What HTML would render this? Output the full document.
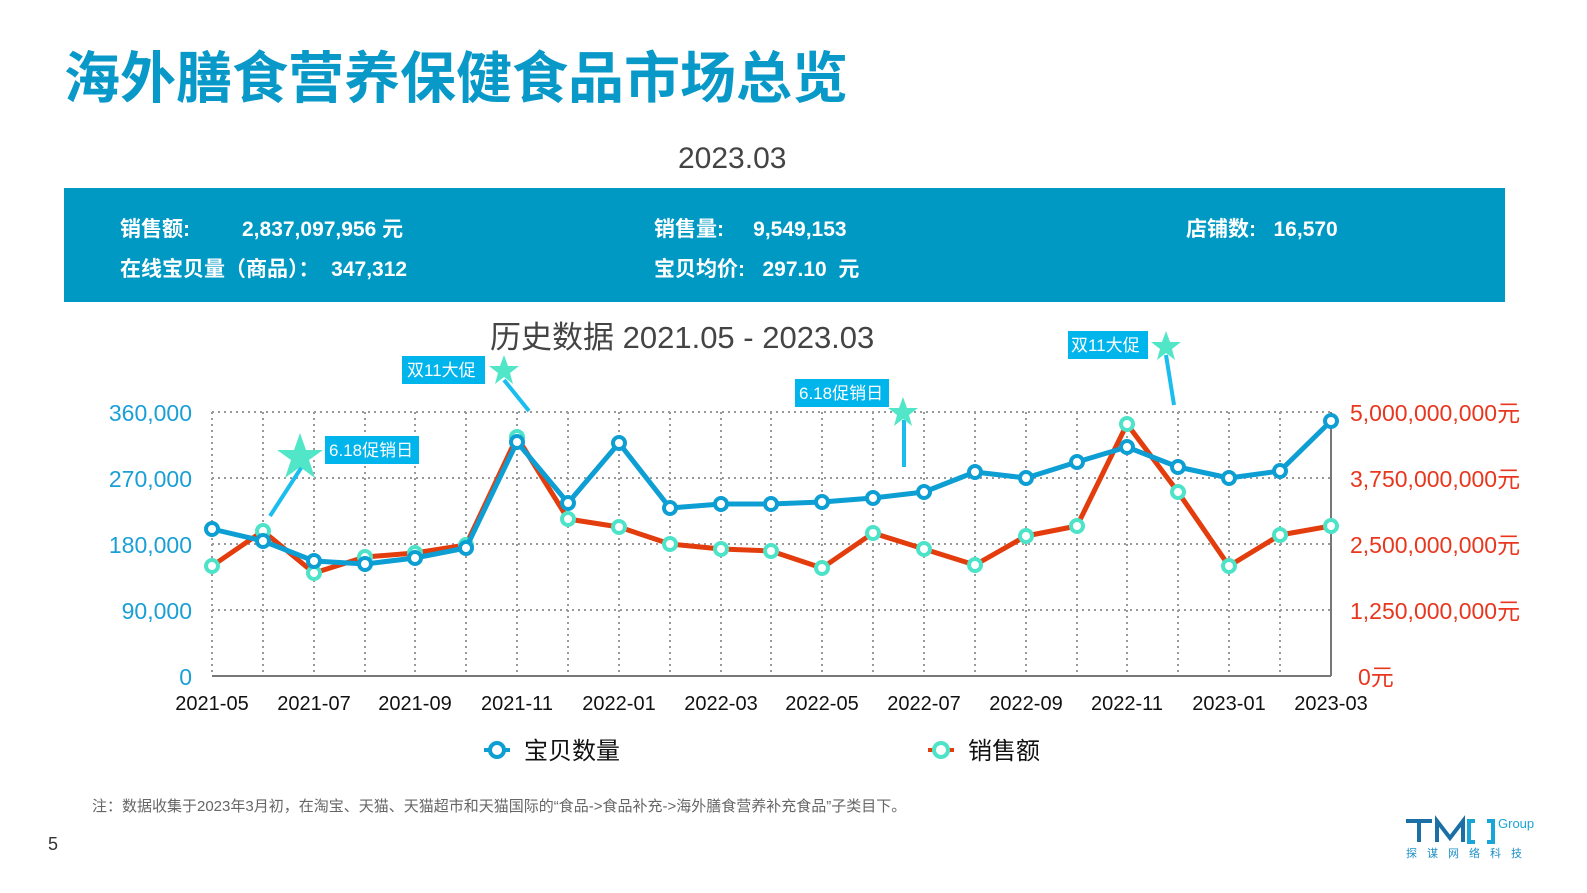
<!DOCTYPE html>
<html><head><meta charset="utf-8"><style>
body{margin:0;width:1587px;height:893px;background:#fff;overflow:hidden;font-family:"Liberation Sans","Noto Sans CJK SC",sans-serif;position:relative}
.a{position:absolute;white-space:nowrap}
</style></head><body>
<div class="a" style="left:64px;top:34px;font-size:56px;font-weight:bold;color:#0899c8;letter-spacing:0px">海外膳食营养保健食品市场总览</div>
<div class="a" style="left:678px;top:142px;font-size:30px;color:#444">2023.03</div>
<div class="a" style="left:64px;top:188px;width:1441px;height:114px;background:#0099c3"></div>
<div class="a" style="left:120px;top:213px;font-size:21px;font-weight:bold;color:#fff">销售额:</div>
<div class="a" style="left:242px;top:213px;font-size:21px;font-weight:bold;color:#fff">2,837,097,956 元</div>
<div class="a" style="left:120px;top:253px;font-size:21px;font-weight:bold;color:#fff">在线宝贝量（商品）：&nbsp; 347,312</div>
<div class="a" style="left:654px;top:213px;font-size:21px;font-weight:bold;color:#fff">销售量:&nbsp;&nbsp;&nbsp;&nbsp; 9,549,153</div>
<div class="a" style="left:654px;top:253px;font-size:21px;font-weight:bold;color:#fff">宝贝均价:&nbsp;&nbsp; 297.10&nbsp; 元</div>
<div class="a" style="left:1186px;top:213px;font-size:21px;font-weight:bold;color:#fff">店铺数:&nbsp;&nbsp; 16,570</div>
<div class="a" style="left:490px;top:312px;font-size:31px;color:#444">历史数据 2021.05 - 2023.03</div>
<svg class="a" style="left:0;top:0" width="1587" height="893">
<g stroke="#999" stroke-width="2" stroke-dasharray="2 4" fill="none">
<line x1="212" y1="412" x2="1331" y2="412"/><line x1="212" y1="478" x2="1331" y2="478"/><line x1="212" y1="544" x2="1331" y2="544"/><line x1="212" y1="610" x2="1331" y2="610"/>
<path d="M263 412V676M314 412V676M365 412V676M415 412V676M466 412V676M517 412V676M568 412V676M619 412V676M670 412V676M721 412V676M771 412V676M822 412V676M873 412V676M924 412V676M975 412V676M1026 412V676M1077 412V676M1127 412V676M1178 412V676M1229 412V676M1280 412V676M212 412V676"/>
</g>
<line x1="212" y1="676" x2="1331" y2="676" stroke="#777" stroke-width="2"/>
<line x1="1331" y1="412" x2="1331" y2="676" stroke="#777" stroke-width="2"/>
<g font-size="23" fill="#1a9fd6" text-anchor="end"><text x="192" y="421">360,000</text><text x="192" y="487">270,000</text><text x="192" y="553">180,000</text><text x="192" y="619">90,000</text><text x="192" y="685">0</text></g>
<g font-size="23" fill="#e8371e"><text x="1350" y="421">5,000,000,000元</text><text x="1350" y="487">3,750,000,000元</text><text x="1350" y="553">2,500,000,000元</text><text x="1350" y="619">1,250,000,000元</text><text x="1358" y="685">0元</text></g>
<g font-size="20" fill="#111" text-anchor="middle"><text x="212" y="710">2021-05</text><text x="314" y="710">2021-07</text><text x="415" y="710">2021-09</text><text x="517" y="710">2021-11</text><text x="619" y="710">2022-01</text><text x="721" y="710">2022-03</text><text x="822" y="710">2022-05</text><text x="924" y="710">2022-07</text><text x="1026" y="710">2022-09</text><text x="1127" y="710">2022-11</text><text x="1229" y="710">2023-01</text><text x="1331" y="710">2023-03</text></g>
<polyline fill="none" stroke="#e33d0e" stroke-width="5" stroke-linejoin="round" points="212,566 263,531 314,573 365,557 415,553 466,545 517,437 568,519 619,527 670,544 721,549 771,551 822,568 873,533 924,549 975,565 1026,536 1077,526 1127,424 1178,492 1229,566 1280,535 1331,526"/>
<g fill="#fff" stroke="#4de3c8" stroke-width="4">
<circle cx="212" cy="566" r="6"/><circle cx="263" cy="531" r="6"/><circle cx="314" cy="573" r="6"/><circle cx="365" cy="557" r="6"/><circle cx="415" cy="553" r="6"/><circle cx="466" cy="545" r="6"/><circle cx="517" cy="437" r="6"/><circle cx="568" cy="519" r="6"/><circle cx="619" cy="527" r="6"/><circle cx="670" cy="544" r="6"/><circle cx="721" cy="549" r="6"/><circle cx="771" cy="551" r="6"/><circle cx="822" cy="568" r="6"/><circle cx="873" cy="533" r="6"/><circle cx="924" cy="549" r="6"/><circle cx="975" cy="565" r="6"/><circle cx="1026" cy="536" r="6"/><circle cx="1077" cy="526" r="6"/><circle cx="1127" cy="424" r="6"/><circle cx="1178" cy="492" r="6"/><circle cx="1229" cy="566" r="6"/><circle cx="1280" cy="535" r="6"/><circle cx="1331" cy="526" r="6"/></g>
<polyline fill="none" stroke="#0d9ed3" stroke-width="5" stroke-linejoin="round" points="212,529 263,541 314,561 365,564 415,558 466,548 517,442 568,503 619,443 670,508 721,504 771,504 822,502 873,498 924,492 975,472 1026,478 1077,462 1127,447 1178,467 1229,478 1280,471 1331,421"/>
<g fill="#fff" stroke="#0d9ed3" stroke-width="4">
<circle cx="212" cy="529" r="6"/><circle cx="263" cy="541" r="6"/><circle cx="314" cy="561" r="6"/><circle cx="365" cy="564" r="6"/><circle cx="415" cy="558" r="6"/><circle cx="466" cy="548" r="6"/><circle cx="517" cy="442" r="6"/><circle cx="568" cy="503" r="6"/><circle cx="619" cy="443" r="6"/><circle cx="670" cy="508" r="6"/><circle cx="721" cy="504" r="6"/><circle cx="771" cy="504" r="6"/><circle cx="822" cy="502" r="6"/><circle cx="873" cy="498" r="6"/><circle cx="924" cy="492" r="6"/><circle cx="975" cy="472" r="6"/><circle cx="1026" cy="478" r="6"/><circle cx="1077" cy="462" r="6"/><circle cx="1127" cy="447" r="6"/><circle cx="1178" cy="467" r="6"/><circle cx="1229" cy="478" r="6"/><circle cx="1280" cy="471" r="6"/><circle cx="1331" cy="421" r="6"/></g>
<g stroke="#1bbdee" stroke-width="4"><line x1="270" y1="516" x2="303" y2="465"/><line x1="504" y1="380" x2="529" y2="411"/><line x1="904" y1="420" x2="904" y2="467"/><line x1="1166" y1="355" x2="1174" y2="405"/></g>
<g fill="#52e6c8">
<polygon points="300,433 306,450 323,450 309,460 315,478 300,467 285,478 291,460 277,450 294,450"/>
<polygon points="504,355 508,366 519,366 510,373 513,384 504,377 495,384 498,373 489,366 500,366"/>
<polygon points="903,397 907,408 918,408 909,415 912,426 903,419 894,426 897,415 888,408 899,408"/>
<polygon points="1166,331 1170,342 1181,342 1172,349 1175,360 1166,353 1157,360 1160,349 1151,342 1162,342"/></g>
<g fill="#00b4ec"><rect x="325" y="436" width="94" height="28"/><rect x="402" y="356" width="83" height="28"/><rect x="795" y="379" width="94" height="28"/><rect x="1068" y="331" width="80" height="28"/></g>
<g fill="#fff" font-size="17"><text x="329" y="456">6.18促销日</text><text x="407" y="376">双11大促</text><text x="799" y="399">6.18促销日</text><text x="1071" y="351">双11大促</text></g>
<line x1="484" y1="750" x2="510" y2="750" stroke="#0d9ed3" stroke-width="4"/><circle cx="497" cy="750" r="7" fill="#fff" stroke="#0d9ed3" stroke-width="4"/>
<line x1="928" y1="750" x2="954" y2="750" stroke="#e33d0e" stroke-width="4"/><circle cx="941" cy="750" r="7" fill="#fff" stroke="#4de3c8" stroke-width="4"/>
<g font-size="24" fill="#111"><text x="524" y="759">宝贝数量</text><text x="968" y="759">销售额</text></g>
<g fill="none" stroke-width="4">
<path d="M1406 821H1432M1419 821V842" stroke="#1b6fa5"/>
<path d="M1437 842V821L1450 838L1463 821V842" stroke="#1b6fa5"/>
<path d="M1475 821H1469V842H1475" stroke="#1aa5d8"/>
<path d="M1487 821H1493V842H1487" stroke="#1aa5d8"/>
</g>
<text x="1498" y="828" font-size="13" fill="#1aa5d8">Group</text>
<text x="1406" y="857" font-size="11" fill="#1b8fc5" letter-spacing="10">探谋网络科技</text>
</svg>
<div class="a" style="left:92px;top:795px;font-size:15px;color:#666">注：数据收集于2023年3月初，在淘宝、天猫、天猫超市和天猫国际的“食品->食品补充->海外膳食营养补充食品”子类目下。</div>
<div class="a" style="left:48px;top:834px;font-size:18px;color:#333">5</div>
</body></html>
